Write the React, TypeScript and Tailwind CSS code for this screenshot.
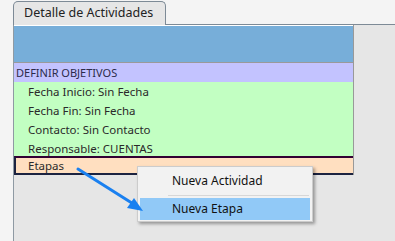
export default function App() {
  const rows = [
    'Fecha Inicio: Sin Fecha',
    'Fecha Fin: Sin Fecha',
    'Contacto: Sin Contacto',
    'Responsable: CUENTAS',
  ]
  return (
    <div
      className="relative w-[395px] h-[241px] overflow-hidden bg-[#f4f4f4] pl-[13px] pt-[1px] flex flex-col text-[#1a1a1a]"
      style={{ fontFamily: 'Tahoma, "Noto Sans", sans-serif' }}
    >
      {/* tab strip */}
      <div className="flex h-[24px] shrink-0">
        <div className="w-[153px] h-full rounded-t-[5px] border border-b-0 border-[#7d8a96] bg-[#e6e6e6] pl-[10px] pt-px text-[12.5px] leading-[20px] whitespace-nowrap text-[#222]">
          Detalle de Actividades
        </div>
        <div className="flex-1 border-b border-[#7d8a96]" />
      </div>

      {/* panel */}
      <div className="flex-1 border-l border-[#8f9aa3] bg-[#e6e6e6]">
        <div className="w-[340px] border-r border-[#999] text-[11px]">
          <div className="h-[37px] bg-[#77aed9] border-t border-white" />
          <div className="h-[20px] bg-[#c3c3ff] border-t border-[#9a9a9a] pl-[2px] leading-[19px] text-[#2b2b4a]">
            DEFINIR OBJETIVOS
          </div>
          <div className="h-[74px] bg-[#c2ffc2] text-[11.5px]">
            {rows.map((r) => (
              <div key={r} className="h-[19px] leading-[19px] pl-[14px] text-[#2a2a2a]">
                {r}
              </div>
            ))}
          </div>
          <div className="h-[19px] bg-[#ffdfc0] border-t-2 border-[#330033] border-b-2 border-b-[#1c2340] border-l-2 border-l-[#1c2340] pl-[12px] leading-[15px] text-[11.5px] text-[#2a2a2a]">
            Etapas
          </div>
        </div>
      </div>

      {/* arrow */}
      <svg className="absolute left-0 top-0 pointer-events-none z-20" width="395" height="241">
        <line x1="78" y1="169" x2="135" y2="205" stroke="#1a80f0" strokeWidth="3" strokeLinecap="round" />
        <polygon points="143,211 127,208 134,198" fill="#1a80f0" />
      </svg>

      {/* context menu */}
      <div className="absolute left-[137px] top-[166px] w-[176px] h-[56px] bg-[#f2f2f2] border border-[#cccccc] shadow-[2px_2px_3px_rgba(0,0,0,0.35)] p-[2px] text-[12px] z-10">
        <div className="h-[24px] pl-[32px] leading-[24px] text-[#111]">Nueva Actividad</div>
        <div className="ml-[28px] mr-[1px] my-[2px] h-px bg-[#d7d7d7]" />
        <div className="h-[22px] bg-[#91c9f7] pl-[32px] leading-[22px] text-[#111]">Nueva Etapa</div>
      </div>
    </div>
  )
}
